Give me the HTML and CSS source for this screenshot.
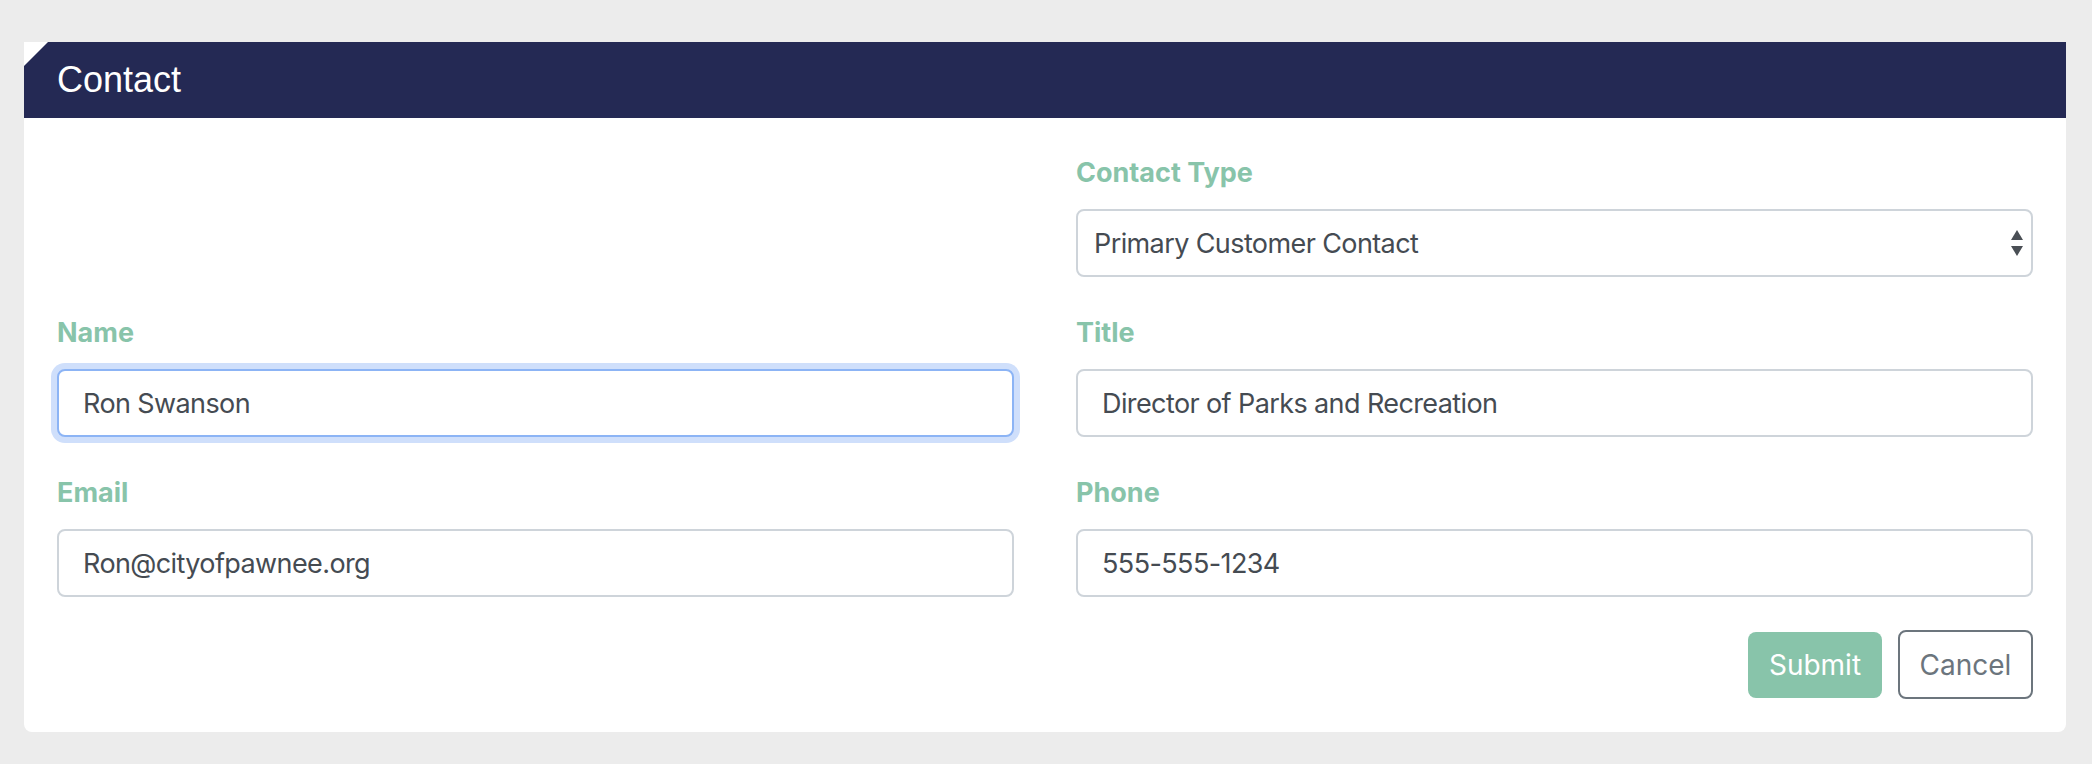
FILE: index.html
```html
<!DOCTYPE html>
<html lang="en">
<head>
<meta charset="utf-8">
<title>Contact</title>
<link rel="stylesheet" href="styles.css">
</head>
<body>
  <section class="card">
    <header class="card-header">Contact</header>
    <form class="card-body">
      <div class="grid">
        <div class="group empty"></div>
        <div class="group">
          <label class="label" for="ctype">Contact Type</label>
          <div class="select-wrap">
            <select id="ctype" class="control select">
              <option>Primary Customer Contact</option>
            </select>
            <svg class="select-arrows" width="12" height="26" viewBox="0 0 12 26" aria-hidden="true">
              <path d="M6 0 L12 10 L0 10 Z" fill="#4a4f55"/>
              <path d="M0 16 L12 16 L6 26 Z" fill="#4a4f55"/>
            </svg>
          </div>
        </div>
        <div class="group">
          <label class="label" for="name">Name</label>
          <input id="name" class="control focus" type="text" value="Ron Swanson">
        </div>
        <div class="group">
          <label class="label" for="title">Title</label>
          <input id="title" class="control" type="text" value="Director of Parks and Recreation">
        </div>
        <div class="group">
          <label class="label" for="email">Email</label>
          <input id="email" class="control" type="text" value="Ron@cityofpawnee.org">
        </div>
        <div class="group">
          <label class="label" for="phone">Phone</label>
          <input id="phone" class="control" type="text" value="555-555-1234">
        </div>
      </div>
      <div class="actions">
        <button type="button" class="btn btn-submit">Submit</button>
        <button type="button" class="btn btn-cancel">Cancel</button>
      </div>
    </form>
  </section>
</body>
</html>
```

FILE: styles.css
```css
html, body {
  margin: 0;
  padding: 0;
}

body {
  background: #ececec;
  padding: 42px 26px 32px 24px;
  font-family: Inter, "Noto Sans", sans-serif;
  color: #495057;
}

.card {
  background: #ffffff;
  border-radius: 0 0 8px 8px;
}

.card-header {
  height: 76px;
  background: #242954;
  color: #ffffff;
  font-family: "Liberation Sans", Arial, sans-serif;
  font-size: 36px;
  line-height: 76px;
  padding-left: 33px;
  clip-path: polygon(24px 0, 100% 0, 100% 100%, 0 100%, 0 24px);
}

.card-body {
  padding: 35px 33px 33px 33px;
  margin: 0;
}

.grid {
  display: grid;
  grid-template-columns: 1fr 1fr;
  column-gap: 62px;
  row-gap: 36px;
}

.group {
  display: flex;
  flex-direction: column;
}

.label {
  font-family: Inter, "Noto Sans", sans-serif;
  font-weight: 700;
  font-size: 27px;
  line-height: 39px;
  color: #88c4aa;
  margin-bottom: 17px;
}

.control {
  box-sizing: border-box;
  height: 68px;
  width: 100%;
  border: 2px solid #ced4da;
  border-radius: 8px;
  background: #ffffff;
  font-family: Inter, "Noto Sans", sans-serif;
  font-size: 27px;
  letter-spacing: -0.6px;
  color: #454b52;
  padding: 0 24px;
  margin: 0;
  outline: none;
}

.control.focus {
  border-color: #8cb4f5;
  box-shadow: 0 0 0 6px #cfdffb;
}

.select-wrap {
  position: relative;
}

.select {
  appearance: none;
  -webkit-appearance: none;
  padding: 0 40px 0 16px;
}

.select-arrows {
  position: absolute;
  right: 10px;
  top: 21px;
  pointer-events: none;
}

.actions {
  display: flex;
  justify-content: flex-end;
  align-items: center;
  gap: 16px;
  margin-top: 33px;
}

.btn {
  box-sizing: border-box;
  font-family: Inter, "Noto Sans", sans-serif;
  font-size: 28px;
  border-radius: 8px;
  cursor: pointer;
  margin: 0;
}

.btn-submit {
  height: 66px;
  width: 134px;
  background: #88c4aa;
  border: none;
  color: #ffffff;
}

.btn-cancel {
  height: 69px;
  width: 135px;
  background: #ffffff;
  border: 2px solid #6c757d;
  color: #6c757d;
}
```
